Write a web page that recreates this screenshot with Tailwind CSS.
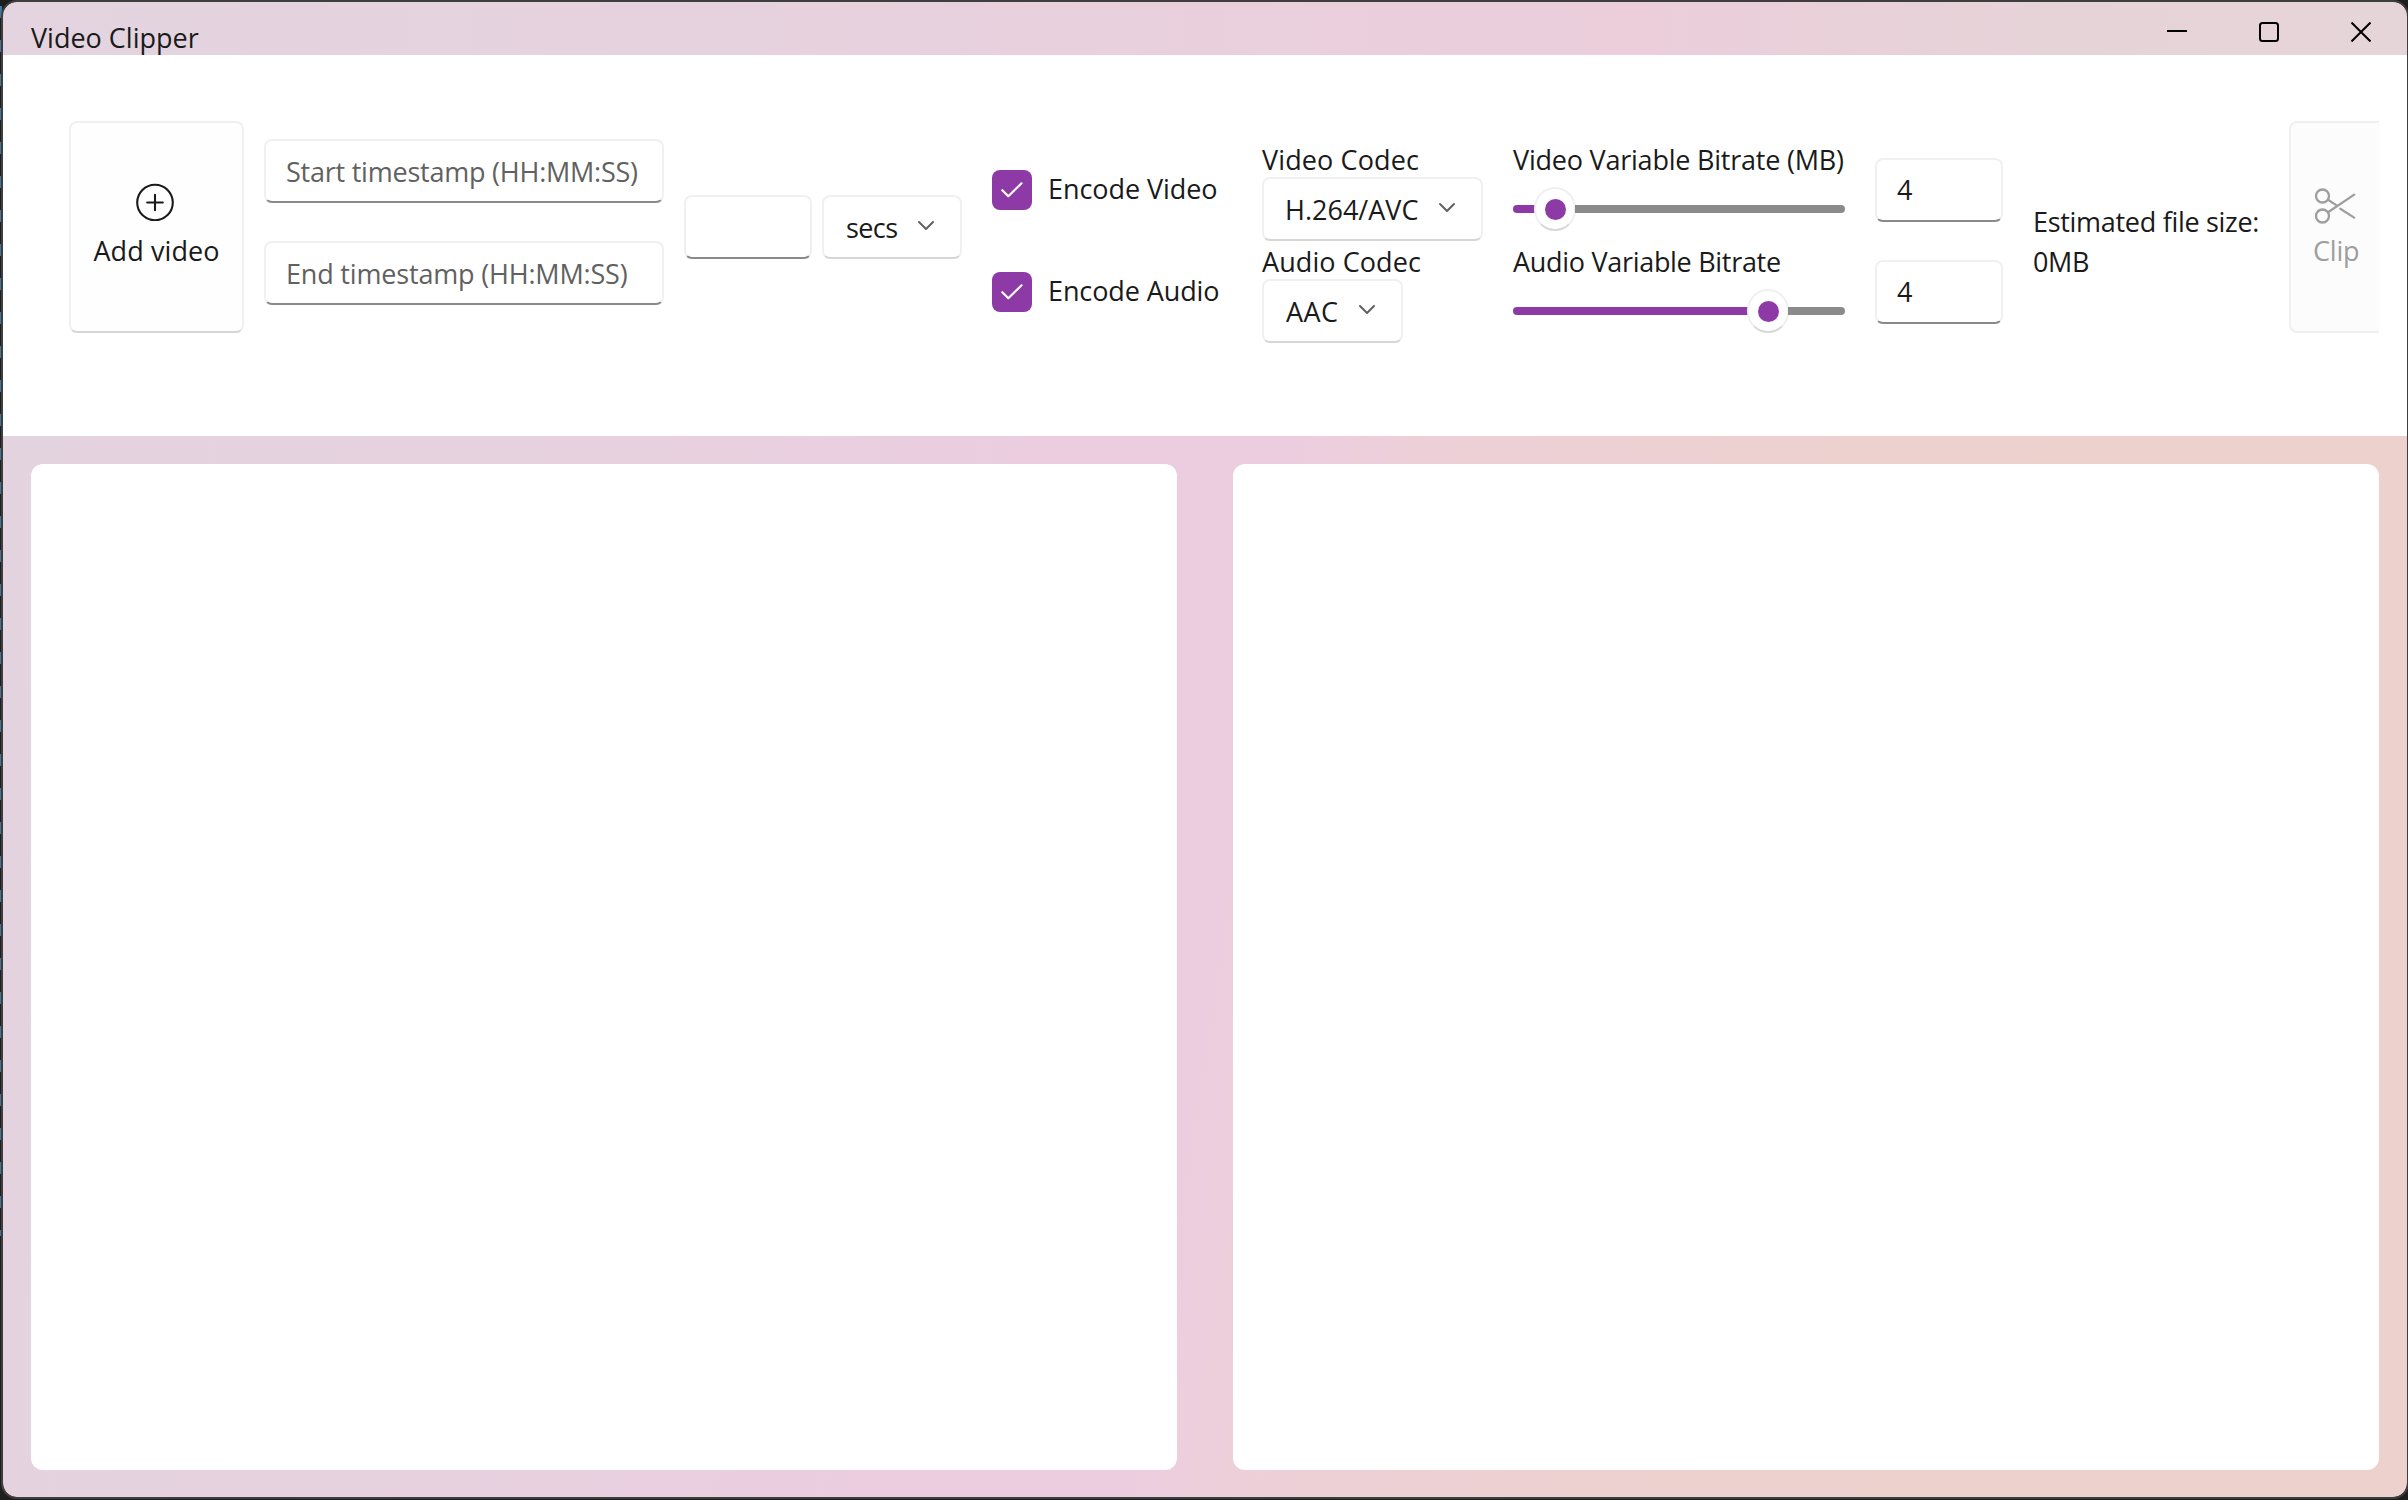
<!DOCTYPE html>
<html lang="en">
<head>
<meta charset="utf-8">
<title>Video Clipper</title>
<script src="https://cdn.jsdelivr.net/npm/@tailwindcss/browser@4"></script>
</head>
<body class="bg-[#1e1e1e] w-[2408px] h-[1500px] overflow-hidden relative font-['Open_Sans','Noto_Sans',sans-serif] text-[27px] leading-[40px] text-[#1a1a1a] whitespace-nowrap">
<!-- sliver of the editor behind the window -->
<div class="absolute left-0 top-[6px] w-[2px] h-[1230px] bg-[repeating-linear-gradient(180deg,#3f77a3_0px,#3f77a3_12px,#1e1e1e_12px,#1e1e1e_34px)]"></div>
<div class="relative w-full h-full pl-[3px] pr-px pt-[2px] pb-[3px]">
<main class="w-full h-full rounded-[14px] overflow-hidden outline-2 outline-[#3e3e3e] flex flex-col bg-[linear-gradient(99deg,#e3d4df_0%,#e7d1df_25%,#ebcddf_42%,#eccde0_51%,#edd0d7_57%,#edd1d0_70%,#edd1cc_85%,#edd1cc_100%)]">
  <header class="h-[53px] shrink-0 flex justify-between overflow-hidden bg-[linear-gradient(90deg,#e3d4df_0%,#e6d2de_30%,#ebcedc_60%,#ebceda_68%,#e6d3d8_85%,#e6d5d8_100%)]">
    <h1 class="pl-[28px] pt-[16px]">Video Clipper</h1>
    <div class="flex items-start pr-[36px] pt-[20px] gap-[72px]">
      <svg class="w-5 h-5" viewBox="0 0 20 20" fill="none" stroke="#000" stroke-width="2"><path d="M0 9h20"/></svg>
      <svg class="w-5 h-5" viewBox="0 0 20 20" fill="none" stroke="#000" stroke-width="2"><rect x="1" y="1" width="18" height="18" rx="2.5"/></svg>
      <svg class="w-5 h-5" viewBox="0 0 20 20" fill="none" stroke="#000" stroke-width="2"><path d="M.5.5l19 19M19.5.5l-19 19"/></svg>
    </div>
  </header>

  <section class="h-[381px] shrink-0 bg-white flex items-start pl-[66px] pr-[28px] pt-[66px]">
    <div class="flex items-start w-full overflow-hidden">
      <button class="w-[175px] h-[212px] shrink-0 rounded-[8px] border-2 border-[#f0f0f0] border-b-[#d6d6d6] bg-[#fefefe] flex flex-col items-center pt-[60px]">
        <svg class="w-[38px] h-[38px] -ml-[3px]" viewBox="0 0 38 38" fill="none" stroke="#1a1a1a" stroke-width="2.1" stroke-linecap="round"><circle cx="19" cy="19.5" r="17.8"/><path d="M19 11.7v15.6M11.2 19.5h15.6"/></svg>
        <span class="mt-[10px] tracking-[0.1px]">Add video</span>
      </button>

      <div class="ml-[20px] mt-[18px] w-[400px] shrink-0 flex flex-col gap-[38px] text-[#616161]">
        <div class="h-16 rounded-[8px] border-2 border-[#f0f0f0] border-b-[#8a8a8a] flex items-center pt-[2px] pl-[20px] tracking-[-0.23px]">Start timestamp (HH:MM:SS)</div>
        <div class="h-16 rounded-[8px] border-2 border-[#f0f0f0] border-b-[#8a8a8a] flex items-center pt-[2px] pl-[20px] tracking-[-0.18px]">End timestamp (HH:MM:SS)</div>
      </div>

      <div class="ml-[20px] mt-[74px] flex gap-[10px] shrink-0">
        <div class="w-[128px] h-16 rounded-[8px] border-2 border-[#f0f0f0] border-b-[#8a8a8a]"></div>
        <div class="w-[140px] h-16 rounded-[8px] border-2 border-[#f0f0f0] border-b-[#d6d6d6] flex items-center justify-between pl-[22px] pr-[25px]">
          <span class="pt-[2px] tracking-[-0.6px]">secs</span>
          <svg class="w-[18px] h-[12px] -mt-[3px]" viewBox="0 0 18 12" fill="none" stroke="#616161" stroke-width="2" stroke-linecap="round" stroke-linejoin="round"><path d="M2 2l7 7 7-7"/></svg>
        </div>
      </div>

      <div class="ml-[30px] mt-[49px] w-[270px] shrink-0 flex flex-col gap-[62px]">
        <div class="flex items-center h-10">
          <span class="w-10 h-10 rounded-[8px] bg-[#8e3aa6] flex items-center justify-center"><svg class="w-[22px] h-4" viewBox="0 0 22 16" fill="none" stroke="#fff" stroke-width="2.2" stroke-linecap="round" stroke-linejoin="round"><path d="M1.3 8.2l6 6L20.5 1.3"/></svg></span>
          <span class="ml-[16px] -mt-[2px] tracking-[-0.06px]">Encode Video</span>
        </div>
        <div class="flex items-center h-10">
          <span class="w-10 h-10 rounded-[8px] bg-[#8e3aa6] flex items-center justify-center"><svg class="w-[22px] h-4" viewBox="0 0 22 16" fill="none" stroke="#fff" stroke-width="2.2" stroke-linecap="round" stroke-linejoin="round"><path d="M1.3 8.2l6 6L20.5 1.3"/></svg></span>
          <span class="ml-[16px] -mt-[2px] tracking-[-0.1px]">Encode Audio</span>
        </div>
      </div>

      <div class="mt-[20px] w-[251px] shrink-0 flex flex-col items-start">
        <span class="h-[36px] leading-[38px] tracking-[0.12px]">Video Codec</span>
        <div class="w-[221px] h-16 rounded-[8px] border-2 border-[#f0f0f0] border-b-[#d6d6d6] flex items-center justify-between pl-[21px] pr-[25px]">
          <span class="pt-[2px]">H.264/AVC</span>
          <svg class="w-[18px] h-[12px] -mt-[3px]" viewBox="0 0 18 12" fill="none" stroke="#616161" stroke-width="2" stroke-linecap="round" stroke-linejoin="round"><path d="M2 2l7 7 7-7"/></svg>
        </div>
        <span class="mt-[2px] h-[36px] leading-[38px] tracking-[0.08px]">Audio Codec</span>
        <div class="w-[141px] h-16 rounded-[8px] border-2 border-[#f0f0f0] border-b-[#d6d6d6] flex items-center justify-between pl-[22px] pr-[25px]">
          <span class="pt-[2px] tracking-[0.4px]">AAC</span>
          <svg class="w-[18px] h-[12px] -mt-[3px]" viewBox="0 0 18 12" fill="none" stroke="#616161" stroke-width="2" stroke-linecap="round" stroke-linejoin="round"><path d="M2 2l7 7 7-7"/></svg>
        </div>
      </div>

      <div class="mt-[20px] w-[332px] shrink-0 flex flex-col">
        <span class="h-[36px] leading-[38px] tracking-[-0.22px]">Video Variable Bitrate (MB)</span>
        <div class="h-16 flex items-center">
          <span class="w-[22px] h-2 rounded-l-full bg-[#8e3aa6]"></span>
          <span class="w-[42px] h-[44px] -mx-px shrink-0 rounded-full border-2 border-[#f0f0f0] border-b-[#d8d8d8] bg-white flex items-center justify-center"><i class="w-[21px] h-[21px] rounded-full bg-[#8e3aa6]"></i></span>
          <span class="flex-1 h-2 rounded-r-full bg-[#8a8a8a]"></span>
        </div>
        <span class="mt-[2px] h-[36px] leading-[38px] tracking-[-0.3px]">Audio Variable Bitrate</span>
        <div class="h-16 flex items-center">
          <span class="w-[235px] h-2 rounded-l-full bg-[#8e3aa6]"></span>
          <span class="w-[42px] h-[44px] -mx-px shrink-0 rounded-full border-2 border-[#f0f0f0] border-b-[#d8d8d8] bg-white flex items-center justify-center"><i class="w-[21px] h-[21px] rounded-full bg-[#8e3aa6]"></i></span>
          <span class="flex-1 h-2 rounded-r-full bg-[#8a8a8a]"></span>
        </div>
      </div>

      <div class="ml-[30px] mt-[37px] w-[128px] shrink-0 flex flex-col gap-[38px]">
        <div class="h-16 rounded-[8px] border-2 border-[#f0f0f0] border-b-[#8a8a8a] flex items-center pl-[20px]">4</div>
        <div class="h-16 rounded-[8px] border-2 border-[#f0f0f0] border-b-[#8a8a8a] flex items-center pl-[20px]">4</div>
      </div>

      <div class="ml-[30px] mt-[81px] w-[256px] shrink-0">
        <p class="tracking-[-0.3px]">Estimated file size:</p>
        <p class="tracking-[-0.36px]">0MB</p>
      </div>

      <button class="w-[175px] h-[212px] shrink-0 rounded-[8px] border-2 border-[#f0f0f0] bg-[#fcfcfc] text-[#9e9e9e] flex flex-col items-start pl-[23px] pt-[64px]">
        <svg class="w-[42px] h-[38px]" viewBox="0 0 42 38" fill="none" stroke="#9e9e9e" stroke-width="2.3" stroke-linecap="round"><circle cx="8.5" cy="9" r="6.5"/><circle cx="8.5" cy="29" r="6.5"/><path d="M14 12.7l8.2 5.4M14 25.3L40.2 7.6M26.3 21.8l13.9 8.8"/></svg>
        <span class="mt-[6px] -ml-[1px] tracking-[-0.2px]">Clip</span>
      </button>
    </div>
  </section>

  <section class="flex-1 flex gap-[56px] px-[28px] pt-[28px] pb-[27px]">
    <div class="flex-1 rounded-[12px] bg-white"></div>
    <div class="flex-1 rounded-[12px] bg-white"></div>
  </section>
</main>
</div>
</body>
</html>
